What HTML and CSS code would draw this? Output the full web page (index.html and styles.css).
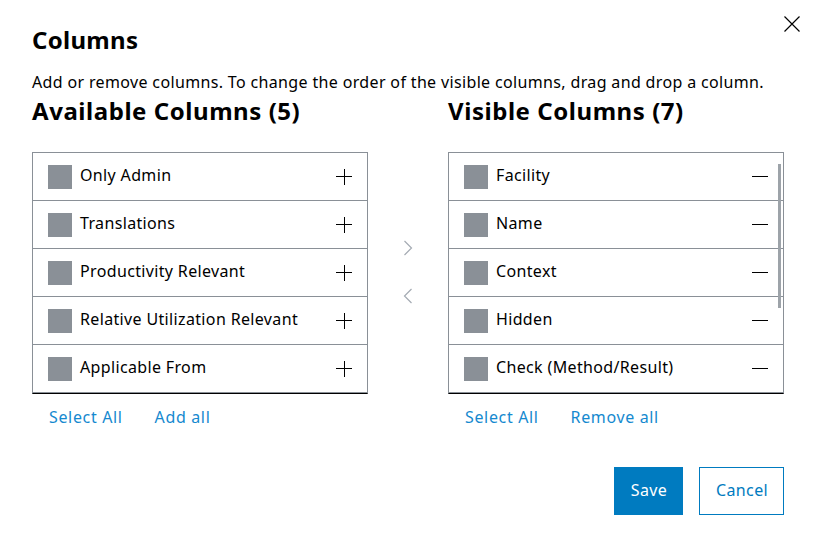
FILE: index.html
```html
<!DOCTYPE html>
<html lang="en">
<head>
<meta charset="utf-8">
<title>Columns</title>
<link rel="stylesheet" href="styles.css">
</head>
<body>
<div class="dialog">
  <div class="header">
    <h2 class="title">Columns</h2>
    <button class="close" aria-label="Close">
      <svg width="16" height="16" viewBox="0 0 16 16"><path d="M0.5 0.5 L15.5 15.5 M15.5 0.5 L0.5 15.5" stroke="#000" stroke-width="1.2" fill="none"/></svg>
    </button>
  </div>
  <p class="desc">Add or remove columns. To change the order of the visible columns, drag and drop a column.</p>
  <div class="columns">
    <h3 class="col-title">Available Columns (5)</h3>
    <div></div>
    <h3 class="col-title">Visible Columns (7)</h3>

    <ul class="list">
      <li class="item"><span class="sq"></span><span class="label">Only Admin</span><span class="plus"></span></li>
      <li class="item"><span class="sq"></span><span class="label">Translations</span><span class="plus"></span></li>
      <li class="item"><span class="sq"></span><span class="label">Productivity Relevant</span><span class="plus"></span></li>
      <li class="item"><span class="sq"></span><span class="label">Relative Utilization Relevant</span><span class="plus"></span></li>
      <li class="item"><span class="sq"></span><span class="label">Applicable From</span><span class="plus"></span></li>
    </ul>

    <div class="arrows">
      <svg width="12" height="16" viewBox="0 0 12 16"><path d="M2.5 1 L9.5 8 L2.5 15" stroke="#a4abb3" stroke-width="1.2" fill="none"/></svg>
      <svg width="12" height="16" viewBox="0 0 12 16"><path d="M9.5 1 L2.5 8 L9.5 15" stroke="#a4abb3" stroke-width="1.2" fill="none"/></svg>
    </div>

    <div class="list-wrap">
      <ul class="list">
        <li class="item"><span class="sq"></span><span class="label">Facility</span><span class="minus"></span></li>
        <li class="item"><span class="sq"></span><span class="label">Name</span><span class="minus"></span></li>
        <li class="item"><span class="sq"></span><span class="label">Context</span><span class="minus"></span></li>
        <li class="item"><span class="sq"></span><span class="label">Hidden</span><span class="minus"></span></li>
        <li class="item"><span class="sq"></span><span class="label">Check (Method/Result)</span><span class="minus"></span></li>
      </ul>
      <span class="thumb"></span>
    </div>

    <div class="links"><a class="link">Select All</a><a class="link">Add all</a></div>
    <div></div>
    <div class="links"><a class="link">Select All</a><a class="link">Remove all</a></div>
  </div>
  <div class="footer">
    <button class="btn primary">Save</button>
    <button class="btn secondary">Cancel</button>
  </div>
</div>
</body>
</html>
```
FILE: styles.css
```css
* { box-sizing: border-box; }
html, body { margin: 0; padding: 0; background: #fff; }
body {
  font-family: "Noto Sans", "Open Sans", sans-serif;
  color: #000;
  font-size: 16px;
  letter-spacing: 0.35px;
}
.dialog {
  width: 816px;
  padding: 24px 32px 32px 32px;
}
.header {
  display: flex;
  justify-content: space-between;
  align-items: flex-start;
}
.title {
  margin: 0;
  font-size: 24px;
  line-height: 32px;
  font-weight: 700;
  letter-spacing: 0.3px;
}
.close {
  margin: -8px -16px 0 0;
  padding: 0;
  border: 0;
  background: none;
  width: 16px;
  height: 16px;
  display: flex;
}
.desc {
  margin: 14px 0 0 0;
  line-height: 24px;
  font-size: 16px;
}
.columns {
  display: grid;
  grid-template-columns: 336px 80px 336px;
}
.col-title {
  margin: 3px 0 27px 0;
  font-size: 24px;
  line-height: 28px;
  font-weight: 700;
  letter-spacing: 0.55px;
}
.list {
  list-style: none;
  margin: 0;
  padding: 0;
  border: 1px solid #8a9097;
  border-bottom: 1px solid #000;
}
.item {
  display: flex;
  align-items: center;
  height: 48px;
  padding: 0 15px;
  border-bottom: 1px solid #8a9097;
  gap: 8px;
}
.sq {
  width: 24px;
  height: 24px;
  background: #8a9097;
  flex: none;
}
.label {
  flex: 1;
  line-height: 24px;
  margin-bottom: 3px;
}
.plus, .minus {
  position: relative;
  width: 16px;
  height: 16px;
  flex: none;
}
.plus::before, .plus::after, .minus::before {
  content: "";
  position: absolute;
  background: #000;
}
.plus::before, .minus::before {
  left: 0; right: 0; top: 7px; height: 1px;
}
.plus::after {
  top: 0; bottom: 0; left: 7.5px; width: 1px;
}
.arrows {
  display: flex;
  flex-direction: column;
  align-items: center;
  gap: 32px;
  padding-top: 88px;
}
.list-wrap {
  position: relative;
}
.thumb {
  position: absolute;
  right: 3px;
  top: 12px;
  width: 3px;
  height: 144px;
  background: #9da3a9;
}
.links {
  display: flex;
  gap: 32px;
  padding: 11px 16px 0 17px;
}
.link {
  color: #1589cf;
  line-height: 24px;
  letter-spacing: 0.65px;
  cursor: pointer;
}
.footer {
  display: flex;
  justify-content: flex-end;
  gap: 16px;
  margin-top: 38px;
}
.btn {
  font-family: inherit;
  font-size: 16px;
  letter-spacing: 0.35px;
  height: 48px;
  padding: 0 15px 2px 16px;
  border: 1px solid #007bc0;
}
.primary { background: #007bc0; color: #fff; }
.secondary { background: #fff; color: #007bc0; }
```
